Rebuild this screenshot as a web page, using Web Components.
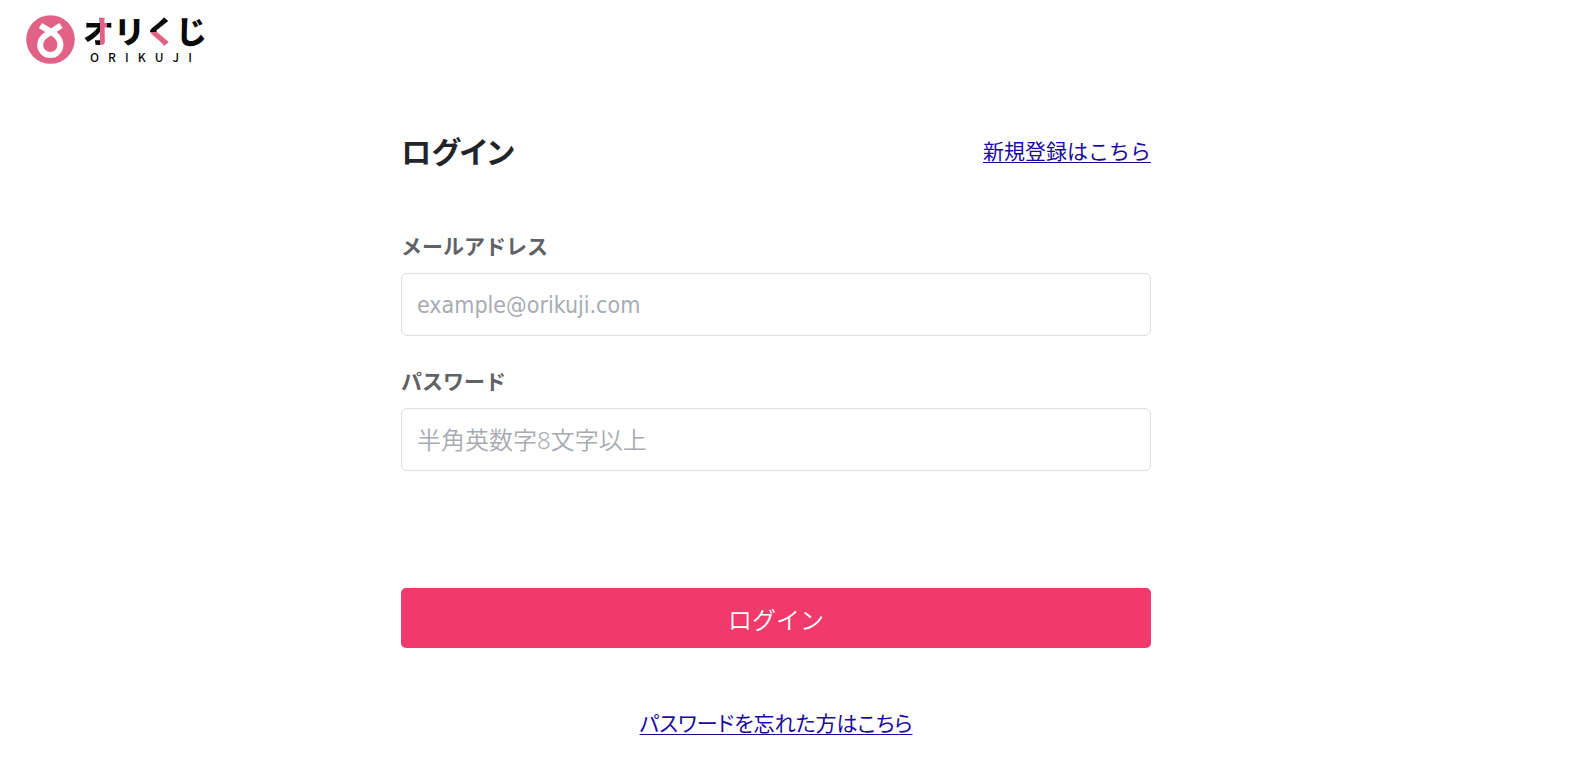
<!DOCTYPE html>
<html lang="ja">
<head>
<meta charset="utf-8">
<meta name="viewport" content="width=device-width, initial-scale=1">
<title>ログイン | オリくじ</title>
<style>
  body {
    margin: 0;
    background: #fff;
    color: #212529;
    font-family: "Noto Sans CJK JP", sans-serif;
    --brand: #e26287;
    --accent: #f03a6b;
    --link: #1a0a9e;
    --gutter: 20px;
  }
</style>
</head>
<body>
<login-page></login-page>

<script>
  const define = (name, html, setup) => {
    const template = document.createElement('template');
    template.innerHTML = html;
    customElements.define(name, class extends HTMLElement {
      constructor() {
        super();
        this.attachShadow({ mode: 'open' }).append(template.content.cloneNode(true));
      }
      connectedCallback() {
        if (setup) setup(this, this.shadowRoot);
      }
    });
  };

  define('brand-logo', `
    <style>
      :host { display: inline-flex; align-items: center; gap: 8px; color: #0a0a0a;
              font-family: "Liberation Sans", "Noto Sans CJK JP", sans-serif; }
      svg { width: 49px; height: 49px; display: block; }
      .words { display: flex; flex-direction: column; }
      .name { font-size: 31px; line-height: 35px; font-weight: 900; }
      .name span { color: transparent; background-clip: text; -webkit-background-clip: text; }
      .o { background-image: linear-gradient(90deg, #0a0a0a 17px, var(--brand) 17px 24px, #0a0a0a 24px); }
      .ku { background-image: linear-gradient(180deg, #0a0a0a 50%, var(--brand) 50%); }
      .roman { display: flex; justify-content: space-between; padding: 0 15px 0 7px;
               font-family: "Noto Sans CJK JP", sans-serif; font-size: 12px; line-height: 14px; font-weight: 500; }
    </style>
    <svg viewBox="0 0 49 49" aria-hidden="true">
      <circle cx="24.5" cy="24.5" r="24.3" fill="#e26287"/>
      <path d="M35 10.500L19.500 20.500C15 23.500 14.200 27 14.200 30A10 10 0 0 0 34.400 30C34.400 26 32.500 22.500 29 19.500C25 16.500 19 13.500 14.500 10.500" fill="none" stroke="#fff" stroke-width="6"/>
    </svg>
    <div class="words">
      <div class="name"><span class="o">オ</span>リ<span class="ku">く</span>じ</div>
      <div class="roman"><span>O</span><span>R</span><span>I</span><span>K</span><span>U</span><span>J</span><span>I</span></div>
    </div>
  `);

  define('site-header', `
    <style>
      :host { display: block; padding: 15px 26px; }
      a { display: inline-block; vertical-align: top; text-decoration: none; }
    </style>
    <header><a href="#top" aria-label="オリくじ"><slot></slot></a></header>
  `);

  define('text-link', `
    <style>
      :host { display: inline-block; font-size: 21px; line-height: 32px; }
      a { color: var(--link); text-decoration: underline; text-decoration-thickness: 1px; text-underline-offset: 3px; }
    </style>
    <a><slot></slot></a>
  `, (host, root) => {
    root.querySelector('a').href = host.getAttribute('href');
  });

  define('form-field', `
    <style>
      :host { display: block; }
      label { display: block; margin-bottom: 12px; font-size: 21px; line-height: 32px; font-weight: 700; color: #606266; }
      input {
        display: block; box-sizing: border-box; width: 100%; height: 63px; margin: 0; padding: 0 15px;
        border: 1px solid #dcdfe6; border-radius: 6px; background: #fff; color: #212529;
        font: 400 23px "DejaVu Sans Condensed", "Noto Sans CJK JP", sans-serif;
      }
      input::placeholder { color: #a8abb2; opacity: 1; }
      :host([type="password"]) input { font: 350 24px "Noto Sans", "Noto Sans CJK JP", sans-serif; }
    </style>
    <label for="control"><slot></slot></label>
    <input id="control">
  `, (host, root) => {
    const input = root.querySelector('input');
    for (const name of ['type', 'placeholder', 'autocomplete']) {
      input.setAttribute(name, host.getAttribute(name));
    }
  });

  define('submit-button', `
    <style>
      :host { display: block; }
      button {
        display: block; width: 100%; height: 60px; margin: 0; padding: 0; border: 0; border-radius: 5px;
        background: var(--accent); color: #fff; cursor: pointer;
        font: 350 24px "Noto Sans CJK JP", sans-serif;
      }
    </style>
    <button type="button"><slot></slot></button>
  `);

  define('login-card', `
    <style>
      :host { display: block; box-sizing: border-box; width: 100%; max-width: 750px; margin: 0 auto; }
      .top { display: flex; align-items: center; justify-content: space-between; margin-bottom: 57px; }
      h1 { margin: 0; font-size: 30px; line-height: 44px; font-weight: 700; font-feature-settings: "palt"; }
      form { display: flex; flex-direction: column; gap: 28px; }
      submit-button { margin-top: 89px; }
      .forgot { margin-top: 58px; text-align: center; font-feature-settings: "palt"; }
    </style>
    <div class="top">
      <h1>ログイン</h1>
      <text-link href="#register">新規登録はこちら</text-link>
    </div>
    <form>
      <form-field type="email" placeholder="example@orikuji.com" autocomplete="email">メールアドレス</form-field>
      <form-field type="password" placeholder="半角英数字8文字以上" autocomplete="current-password">パスワード</form-field>
      <submit-button>ログイン</submit-button>
    </form>
    <div class="forgot"><text-link href="#reset">パスワードを忘れた方はこちら</text-link></div>
  `);

  define('login-page', `
    <style>
      :host { display: block; padding-right: var(--gutter); }
      main { padding: 44px 0 0; }
    </style>
    <site-header><brand-logo></brand-logo></site-header>
    <main><login-card></login-card></main>
  `);
</script>
</body>
</html>
